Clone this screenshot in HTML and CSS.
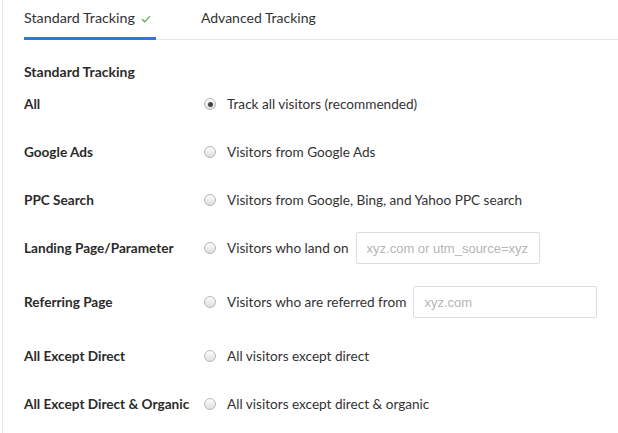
FILE: index.html
```html
<!DOCTYPE html>
<html>
<head>
<meta charset="utf-8">
<link rel="stylesheet" href="styles.css">
</head>
<body>
<div class="panel">
  <div class="tabs">
    <div class="tab active">Standard Tracking <svg class="check" width="10" height="8" viewBox="0 0 10 8"><path d="M1 4.2 L3.8 6.8 L9 1.2" fill="none" stroke="#4cae4f" stroke-width="1.2"/></svg></div>
    <div class="tab">Advanced Tracking</div>
  </div>
  <h2 class="heading">Standard Tracking</h2>
  <div class="rows">
    <div class="row">
      <div class="label">All</div>
      <label class="option"><span class="radio checked"></span>Track all visitors (recommended)</label>
    </div>
    <div class="row">
      <div class="label">Google Ads</div>
      <label class="option"><span class="radio"></span>Visitors from Google Ads</label>
    </div>
    <div class="row">
      <div class="label">PPC Search</div>
      <label class="option"><span class="radio"></span>Visitors from Google, Bing, and Yahoo PPC search</label>
    </div>
    <div class="row row-input">
      <div class="label">Landing Page/Parameter</div>
      <label class="option"><span class="radio"></span>Visitors who land on<input class="field" type="text" placeholder="xyz.com or utm_source=xyz"></label>
    </div>
    <div class="row row-input">
      <div class="label">Referring Page</div>
      <label class="option"><span class="radio"></span>Visitors who are referred from<input class="field" type="text" placeholder="xyz.com"></label>
    </div>
    <div class="row">
      <div class="label">All Except Direct</div>
      <label class="option"><span class="radio"></span>All visitors except direct</label>
    </div>
    <div class="row">
      <div class="label">All Except Direct &amp; Organic</div>
      <label class="option"><span class="radio"></span>All visitors except direct &amp; organic</label>
    </div>
  </div>
</div>
</body>
</html>
```
FILE: styles.css
```css
html, body {
  margin: 0;
  padding: 0;
  background: #fff;
}
body {
  font-family: Lato, "Liberation Sans", sans-serif;
  font-size: 14px;
  color: #333;
}
.panel {
  margin-left: 2px;
  border-left: 1px solid #e8ecf2;
  padding-left: 21px;
  min-height: 433px;
  box-sizing: border-box;
}
.tabs {
  display: flex;
  border-bottom: 1px solid #e4e6ea;
  height: 39px;
}
.tab {
  padding: 8px 0 0;
  line-height: 20px;
  height: 29px;
  margin-right: 45px;
  color: #333;
  display: flex;
  align-items: flex-start;
}
.tab.active {
  border-bottom: 3px solid #2f77df;
  padding-right: 5px;
  font-size: 14.3px;
}
.check {
  margin-left: 6px;
  margin-top: 7px;
}
.heading {
  margin: 24px 0 0;
  font-size: 14px;
  line-height: 16px;
  font-weight: 700;
  color: #2b2b2b;
}
.row {
  display: flex;
  align-items: center;
  padding: 14px 0;
  min-height: 20px;
}
.row-input {
  padding: 8px 0 14px;
}
.label {
  width: 180px;
  flex: none;
  font-weight: 700;
  font-size: 13.6px;
  color: #2b2b2b;
  line-height: 20px;
}
.option {
  display: flex;
  align-items: center;
  line-height: 20px;
  font-size: 13.6px;
  color: #333;
}
.radio {
  width: 12px;
  height: 12px;
  box-sizing: border-box;
  border-radius: 50%;
  border: 1px solid #b8b8b8;
  background: linear-gradient(#fdfdfd, #dedede);
  margin-right: 11px;
  position: relative;
  flex: none;
}
.radio.checked::after {
  content: "";
  position: absolute;
  left: 2.5px;
  top: 2.5px;
  width: 5px;
  height: 5px;
  border-radius: 50%;
  background: #444;
}
.field {
  margin-left: 7px;
  width: 184px;
  height: 32px;
  box-sizing: border-box;
  border: 1px solid #dcdcdc;
  border-radius: 2px;
  padding: 0 10px;
  font-family: "Liberation Sans", Arial, sans-serif;
  font-size: 13px;
  color: #333;
  outline: none;
}
.field::placeholder {
  color: #b5b5b5;
}
```
